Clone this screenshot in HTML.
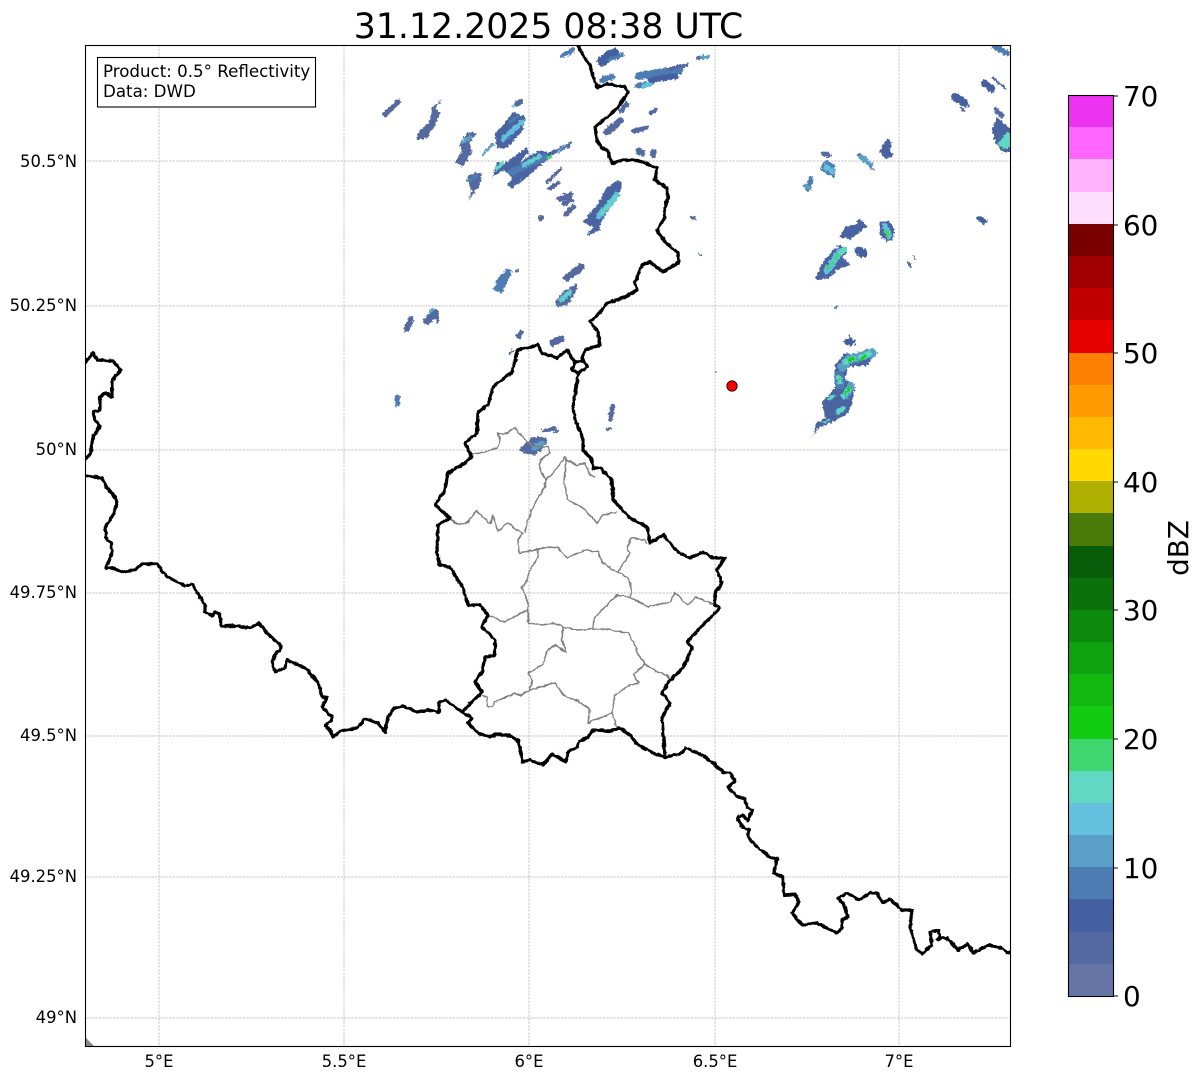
<!DOCTYPE html>
<html><head><meta charset="utf-8"><style>
html,body{margin:0;padding:0;background:#fff}
svg{display:block}
text{font-family:"DejaVu Sans","Liberation Sans",sans-serif;fill:#000}
.g{stroke:#b4b4b4;stroke-width:.7;stroke-dasharray:2.5 1;fill:none}
.k{fill:none;stroke:#000;stroke-width:3.2;stroke-linejoin:round;stroke-linecap:round}
.y{fill:none;stroke:#808080;stroke-width:1.6;stroke-linejoin:round}
.a{stroke:#54699f;fill:none}.b{stroke:#4460a0;fill:none}.m{stroke:#4c7cb2;fill:none}.c{stroke:#5aa0c6;fill:none}.s{stroke:#64c0dc;fill:none}.d{stroke:#60d8c4;fill:none}.e{stroke:#3fd870;fill:none}.f{stroke:#12cc12;fill:none}
.pa{fill:#54699f}.pb{fill:#4a64a2}.pm{fill:#4c7cb2}
.t{font-size:16.4px}.r{text-anchor:end}.n{text-anchor:middle}.l{font-size:27.8px}
</style></head><body>
<svg width="1202" height="1081" viewBox="0 0 1202 1081" xmlns="http://www.w3.org/2000/svg">
<defs>
<filter id="rough" filterUnits="userSpaceOnUse" x="0" y="0" width="1202" height="1081" color-interpolation-filters="sRGB"><feTurbulence type="fractalNoise" baseFrequency=".22" numOctaves="2" seed="4"/><feDisplacementMap in="SourceGraphic" scale="3" xChannelSelector="R" yChannelSelector="G"/></filter>
<filter id="rain" filterUnits="userSpaceOnUse" x="0" y="0" width="1202" height="1081" color-interpolation-filters="sRGB"><feTurbulence type="fractalNoise" baseFrequency=".4" numOctaves="2" seed="9"/><feDisplacementMap in="SourceGraphic" scale="5" xChannelSelector="R" yChannelSelector="G"/></filter>
<clipPath id="ax"><rect x="85.500" y="45.500" width="925" height="1001"/></clipPath>
</defs>
<rect width="1202" height="1081" fill="#fff"/>
<text x="548.500" y="38" class="n" font-size="34.700">31.12.2025 08:38 UTC</text>

<g class="g">
<path d="M159 45V1046M344 45V1046M529 45V1046M715 45V1046M899 45V1046"/>
<path d="M85 161H1010M85 306H1010M85 450H1010M85 593H1010M85 736H1010M85 877H1010M85 1018H1010"/>
</g>

<g clip-path="url(#ax)">
<!-- precipitation -->
<g stroke-linecap="round" filter="url(#rain)">
<path class="a" stroke-width="5" d="M385 115L398 102"/>
<path class="pa" d="M416 140L427 138L435 125L440 113L435 108L442 100L432 107L430 120L418 133Z"/>
<path class="d" stroke-width="3" d="M513 106L515 105"/><path class="a" stroke-width="5" d="M517 104L521 101"/>
<path class="pb" d="M497 148L507 148L523 130L525 117L513 112L503 125L495 133Z"/><path class="s" stroke-width="5" d="M503 139L522 122"/><path class="m" stroke-width="3" d="M510 122L518 116"/>
<path class="pa" d="M460 145L468 132L477 133L470 142L472 152L463 167L455 162L462 152Z"/><path class="c" stroke-width="4" d="M463 142L470 137"/>
<path class="c" stroke-width="2.500" d="M483 154L493 144"/>
<path class="pb" d="M492 178L497 162L505 163L527 147L528 153L520 162L540 150L548 153L572 141L570 147L553 155L545 162L527 177L512 188L508 185L512 177L503 170Z"/>
<path class="m" stroke-width="7" d="M512 172L544 157"/><path class="s" stroke-width="5" d="M524 165L540 156"/><path class="d" stroke-width="3" d="M530 162L537 158"/><path class="e" stroke-width="3" d="M548 158L551 156"/><path class="d" stroke-width="4" d="M497 168L502 164"/><path class="c" stroke-width="2" d="M558 151L566 145"/>
<path class="a" stroke-width="3" d="M547 182L561 169"/>
<path class="a" stroke-width="4" d="M549 189L558 183"/>
<path class="pa" d="M467 202L472 192L468 182L467 178L473 173L482 173L480 185L472 195Z"/><path class="m" stroke-width="4" d="M469 180L476 176"/>
<path class="a" stroke-width="6" d="M560 199L570 195"/><path class="a" stroke-width="5" d="M564 204L571 200"/>
<path class="a" stroke-width="5" d="M566 214L573 207"/>
<circle cx="541" cy="218" r="2.800" fill="#54699f"/>
<path class="pb" d="M587 235L593 227L583 222L597 205L607 187L618 180L622 183L620 192L610 208L600 223L600 230L588 236Z"/><path class="s" stroke-width="6" d="M599 216L617 195"/><path class="d" stroke-width="3" d="M601 214L616 196"/>
<path class="pm" d="M493 290L498 278L508 268L512 272L502 293Z"/><path class="a" stroke-width="2" d="M516 272L518 270"/>
<path class="a" stroke-width="7" d="M567 278L581 267"/>
<path class="pa" d="M555 302L563 292L577 283L577 290L568 305L558 307Z"/><path class="s" stroke-width="5" d="M561 300L570 292"/><path class="d" stroke-width="3" d="M562 300L569 293"/>
<path class="a" stroke-width="6" d="M407 329L411 319"/><path class="a" stroke-width="2.500" d="M405 331L406 326"/>
<path class="a" stroke-width="8" d="M427 321L435 313"/><path class="c" stroke-width="3" d="M430 311L433 310"/><path class="a" stroke-width="3" d="M437 312V321"/>
<path class="m" stroke-width="5" d="M563 55L573 50"/>
<path class="b" stroke-width="10" d="M602 61L614 53"/><path class="m" stroke-width="4" d="M609 60L622 55"/>
<path class="m" stroke-width="6" d="M602 80L612 77"/>
<path class="m" stroke-width="8" d="M639 76L680 70"/><path class="a" stroke-width="4" d="M670 69L686 65"/>
<path class="m" stroke-width="5" d="M637 86L645 84"/><path class="s" stroke-width="5" d="M644 86L651 83"/><path class="b" stroke-width="6" d="M651 80L676 76"/>
<path class="a" stroke-width="4" d="M698 58L703 57"/><path class="c" stroke-width="4" d="M703 57L708 57"/>
<path class="a" stroke-width="5" d="M621 111L627 104"/>
<path class="a" stroke-width="7" d="M607 132L620 121"/>
<path class="a" stroke-width="5" d="M634 131L646 128"/>
<path class="a" stroke-width="4" d="M651 113L656 110"/>
<path class="a" stroke-width="6" d="M638 151L642 153"/><path class="a" stroke-width="6" d="M653 152V155"/>
<path class="a" stroke-width="3" d="M692 218H695"/><path class="a" stroke-width="2" d="M699 255H701"/>
<path class="a" stroke-width="5" d="M518 337L521 333"/><path class="a" stroke-width="7" d="M553 343L561 339"/><path class="a" stroke-width="3" d="M510 354L512 351"/>
<path class="pa" d="M518 450L533 437L543 437L548 440L543 448L535 455L525 453Z"/><path class="c" stroke-width="6" d="M534 448L542 443"/>
<path class="a" stroke-width="3.500" d="M543 431L555 428"/><path class="a" stroke-width="3.500" d="M553 428L556 431"/>
<path class="a" stroke-width="5" d="M610 419L613 406"/><path class="a" stroke-width="2" d="M607 429H610"/>
<path class="m" stroke-width="5" d="M397.500 397V404"/>

<path class="m" stroke-width="6" d="M994 46L1007 53"/>
<path class="b" stroke-width="7" d="M984 83L992 89"/><path class="a" stroke-width="2" d="M993 78L1005 88"/>
<path class="b" stroke-width="8" d="M955 97L965 103"/><path class="a" stroke-width="2" d="M966 105L969 106M961 108L964 111"/>
<path class="a" stroke-width="5" d="M996 110L1002 116"/><path class="pb" d="M992 130L997 117L1012 130L1012 152L1002 152L995 142Z"/><path class="d" d="M997 143L1007 132L1012 135L1012 148L1003 148Z" style="fill:#60d8c4;stroke:none"/>
<path class="pb" d="M879 152L883 145L887 138L892 142L890 148L893 157L885 158Z"/>
<path class="a" stroke-width="2" d="M858 154L863 158"/><path class="c" stroke-width="5" d="M861 157L871 165"/><path class="a" stroke-width="2" d="M870 167L874 170"/>
<path class="a" stroke-width="5" d="M823 154L829 155"/>
<path class="pm" d="M820 168L825 160L835 165L835 177L827 175Z"/><path class="s" stroke-width="6" d="M826 167L832 171"/>
<path class="m" stroke-width="5" d="M811 178L808 189"/><path class="c" stroke-width="4" d="M805 186L810 188"/>
<path class="pb" d="M840 237L845 227L855 225L860 218L867 227L858 233L850 240Z"/>
<path class="pb" d="M880 222L888 220L895 230L893 240L887 242L880 235Z"/><path class="s" stroke-width="6" d="M885 226L889 236"/><path class="e" stroke-width="4" d="M886 232L888 235"/>
<path class="a" stroke-width="2" d="M908 262L911 267M914 257L915 259"/>
<path class="b" stroke-width="5" d="M979 218L985 222"/>
<path class="b" stroke-width="9" d="M859 251L863 253"/>
<path class="pb" d="M815 280L822 263L833 250L840 245L847 252L843 258L850 265L837 270L830 277L820 280Z"/>
<path class="s" stroke-width="7" d="M827 271L840 252"/><path class="d" stroke-width="5" d="M840 254L845 249"/><path class="e" stroke-width="3" d="M828 269L832 263M835 258L838 255"/>
<circle cx="836" cy="307" r="1.500" fill="#54699f"/>
<path class="b" stroke-width="6" d="M847 342L853 342"/><path class="b" stroke-width="2" d="M850 336V340"/>
<path class="pb" d="M813 437L817 422L825 418L822 402L835 388L835 365L845 353L858 355L868 348L875 353L868 365L848 367L845 378L855 385L852 405L848 413L833 422L818 428Z"/>
<path class="c" stroke-width="9" d="M842 367L850 359L872 353"/><path class="d" stroke-width="6" d="M846 362L853 359M861 358L869 354"/><path class="f" stroke-width="3.500" d="M849 360L853 359M861 359L865 356"/>
<path class="m" stroke-width="10" d="M839 376L840 384"/><path class="d" stroke-width="5" d="M839 378L840 382"/><path class="f" stroke-width="1.500" d="M839 379L841 380"/>
<path class="c" stroke-width="8" d="M845 396L851 386"/><path class="d" stroke-width="5" d="M843 396L849 389"/><path class="f" stroke-width="2.500" d="M845 394L850 388"/>
<path class="d" stroke-width="3" d="M829 399L834 396"/>
<path class="d" stroke-width="5" d="M838 412L844 408"/><path class="d" stroke-width="2" d="M823 423L829 420"/>
</g>

<!-- cantons -->
<g class="y" filter="url(#rough)">
<path d="M472 454L485 452L497 448L500 440L498 433L503 435L515 428L527 442L535 447L548 447L550 453L540 460L540 470L546 480L545 487L535 503L527 522L525 533"/>
<path d="M546 480L553 473L565 457L567 460L577 465L585 463L590 475L595 477"/>
<path d="M566 458L564 483L568 500L583 508L597 523L603 515L617 512"/>
<path d="M450 520L460 525L468 522L476 511L483 517L490 524L493 515L498 531L507 523L522 533L518 540L519 553L538 549L550 547L558 548L567 558L585 550L598 552L603 563L613 570L618 572L630 553L627 548L631 538L645 540L647 544"/>
<path d="M618 572L628 578L632 590L630 597"/>
<path d="M538 549L538 558L530 570L526 583L522 587L528 603L528 623L543 625L553 623L563 627L577 630L592 629L595 617L617 595L630 597L648 607L670 602L675 593L688 605L695 597L715 605"/>
<path d="M592 629L605 629L628 633L632 640L640 657L645 664L657 672L667 675L669 679"/>
<path d="M645 664L633 675L639 683L630 685L615 695L612 713L617 728"/>
<path d="M563 627L562 640L566 652L555 645L548 650L542 665L529 673L532 682L530 690L520 696L515 693L495 702L492 707L488 707L487 698L482 695"/>
<path d="M530 690L555 683L565 697L577 700L590 710L588 723L600 718L612 713"/>
<path d="M488 615L505 622L527 610"/>
</g>

<!-- borders -->
<g class="k" filter="url(#rough)">
<path d="M578 46L583 55L590 65L593 77L597 87L607 84L625 87L628 92L620 105L610 115L595 127L597 140L602 148L607 150L612 163L623 160L633 160L643 162L657 168L655 180L667 188L668 198L665 208L665 217L657 230L665 242L678 253L679 262L663 272L650 262L642 265L635 282L637 290L625 297L607 303L600 312L590 322L598 332L600 345L585 350L582 358L587 367L578 373L572 370L575 362L582 361M578 373L577 383L573 407L575 420L583 438L583 450L592 460L593 468L600 468L612 480L613 500L630 518L647 527L650 543L663 535L678 552L690 558L703 552L713 558L725 558L717 570L722 583L715 593L715 605L720 608L703 625L687 642L692 648L683 668L670 680L662 693L670 703L662 717L665 757"/>
<path d="M575 363L567 350L557 358L542 353L538 345L518 350L512 372L493 387L488 405L478 412L477 433L465 443L472 457L462 465L448 473L445 490L435 505L450 518L438 525L437 553L440 565L450 567L463 588L468 605L480 605L488 615L482 627L495 640L495 655L485 657L482 672L475 682L482 692L462 712"/>
<path d="M462 712L472 718L468 723L478 733L490 737L497 734L510 736L518 740L522 757L522 762L530 760L543 765L552 754L566 762L568 752L577 747L580 741L587 738L593 730L610 731L619 728L630 735L638 745L653 753L665 757L680 754L686 748L702 755L713 763L723 772L730 773L735 781L728 787L735 795L745 799L747 808L752 810L748 820L742 815L738 818L742 827L749 830L748 837L757 847L770 857L777 859L774 873L783 877L784 895L795 894L799 902L792 913L802 925L817 923L837 933L842 928L842 920L848 917L843 903L838 898L847 893L859 900L870 893L877 893L883 903L890 899L902 910L912 910L910 927L917 950L922 954L932 945L930 932L938 930L940 937L937 939L947 938L958 950L968 944L973 953L989 945L1003 949L1008 953L1012 951"/>
<path d="M462 712L445 700L439 703L439 712L428 710L417 712L403 706L395 708L388 717L385 732L378 723L365 719L357 728L340 731L333 737L330 730L325 725L330 722L332 717L322 707L327 698L322 697L318 682L305 668L287 660L285 668L275 672L272 662L275 655L282 647L267 633L259 623L250 628L237 626L221 626L220 615L215 611L212 616L205 612L205 605L192 584L185 586L166 576L157 564L142 564L135 570L123 572L112 568L106 568L112 553L111 543L107 540L105 528L113 515L117 503L115 497L107 488L102 478L83 475"/>
<path d="M83 365L93 353L97 360L113 361L121 370L112 380L112 397L105 393L100 397L100 410L93 412L95 420L100 426L93 437L90 455L83 461"/>
</g>
</g>

<path d="M85 1037L94 1046H85Z" fill="#8a8a8a"/>

<circle cx="732" cy="386" r="5.200" fill="#ff0000" stroke="#000" stroke-width=".8"/>
<circle cx="716" cy="372" r=".6" fill="#000"/>

<rect x="85.500" y="45.500" width="925" height="1001" fill="none" stroke="#000" stroke-width="1.100"/>

<rect x="97.500" y="57.500" width="218" height="49.500" fill="#fff" stroke="#000" stroke-width="1.100"/>
<text x="103" y="77" font-size="16.670">Product: 0.5° Reflectivity</text>
<text x="103" y="97" font-size="16.670">Data: DWD</text>

<text x="77" y="167" class="t r">50.5°N</text>
<text x="77" y="311" class="t r">50.25°N</text>
<text x="77" y="455" class="t r">50°N</text>
<text x="77" y="598" class="t r">49.75°N</text>
<text x="77" y="741" class="t r">49.5°N</text>
<text x="77" y="882" class="t r">49.25°N</text>
<text x="77" y="1023" class="t r">49°N</text>
<text x="159" y="1067" class="t n">5°E</text>
<text x="344" y="1067" class="t n">5.5°E</text>
<text x="529" y="1067" class="t n">6°E</text>
<text x="715" y="1067" class="t n">6.5°E</text>
<text x="899" y="1067" class="t n">7°E</text>

<!-- colorbar -->
<g shape-rendering="crispEdges">
<rect x="1068" y="96" width="45" height="32.500" fill="#ec34f0"/>
<rect x="1068" y="127" width="45" height="33" fill="#ff66ff"/>
<rect x="1068" y="159" width="45" height="33" fill="#ffb3ff"/>
<rect x="1068" y="192" width="45" height="33" fill="#ffddff"/>
<rect x="1068" y="224" width="45" height="33" fill="#7a0000"/>
<rect x="1068" y="256" width="45" height="33" fill="#a00000"/>
<rect x="1068" y="288" width="45" height="33" fill="#c00000"/>
<rect x="1068" y="320" width="45" height="33" fill="#e60000"/>
<rect x="1068" y="353" width="45" height="33" fill="#ff7f00"/>
<rect x="1068" y="385" width="45" height="33" fill="#ff9b00"/>
<rect x="1068" y="417" width="45" height="33" fill="#ffb900"/>
<rect x="1068" y="449" width="45" height="33" fill="#ffd900"/>
<rect x="1068" y="481" width="45" height="33" fill="#b0b000"/>
<rect x="1068" y="513" width="45" height="33" fill="#4a7a08"/>
<rect x="1068" y="546" width="45" height="33" fill="#085e08"/>
<rect x="1068" y="578" width="45" height="33" fill="#0b720b"/>
<rect x="1068" y="610" width="45" height="33" fill="#0c8a0c"/>
<rect x="1068" y="642" width="45" height="33" fill="#0ea20e"/>
<rect x="1068" y="674" width="45" height="33" fill="#10b810"/>
<rect x="1068" y="706" width="45" height="33" fill="#12cc12"/>
<rect x="1068" y="739" width="45" height="32" fill="#3fd870"/>
<rect x="1068" y="771" width="45" height="33" fill="#60d8c4"/>
<rect x="1068" y="803" width="45" height="33" fill="#64c0dc"/>
<rect x="1068" y="835" width="45" height="33" fill="#5aa0c6"/>
<rect x="1068" y="867" width="45" height="33" fill="#4c7cb2"/>
<rect x="1068" y="899" width="45" height="33" fill="#4460a0"/>
<rect x="1068" y="932" width="45" height="33" fill="#54699f"/>
<rect x="1068" y="964" width="45" height="32" fill="#6575a6"/>
</g>
<rect x="1068.500" y="95.500" width="45" height="901" fill="none" stroke="#000" stroke-width="1.100"/>
<path d="M1113 96h5M1113 225h5M1113 353h5M1113 482h5M1113 610h5M1113 739h5M1113 868h5M1113 996h5" stroke="#000" stroke-width="1.100"/>
<text x="1123" y="106" class="l">70</text>
<text x="1123" y="235" class="l">60</text>
<text x="1123" y="363" class="l">50</text>
<text x="1123" y="492" class="l">40</text>
<text x="1123" y="620" class="l">30</text>
<text x="1123" y="749" class="l">20</text>
<text x="1123" y="878" class="l">10</text>
<text x="1123" y="1006" class="l">0</text>
<text transform="translate(1188 548) rotate(-90)" class="l n">dBZ</text>
</svg>
</body></html>
